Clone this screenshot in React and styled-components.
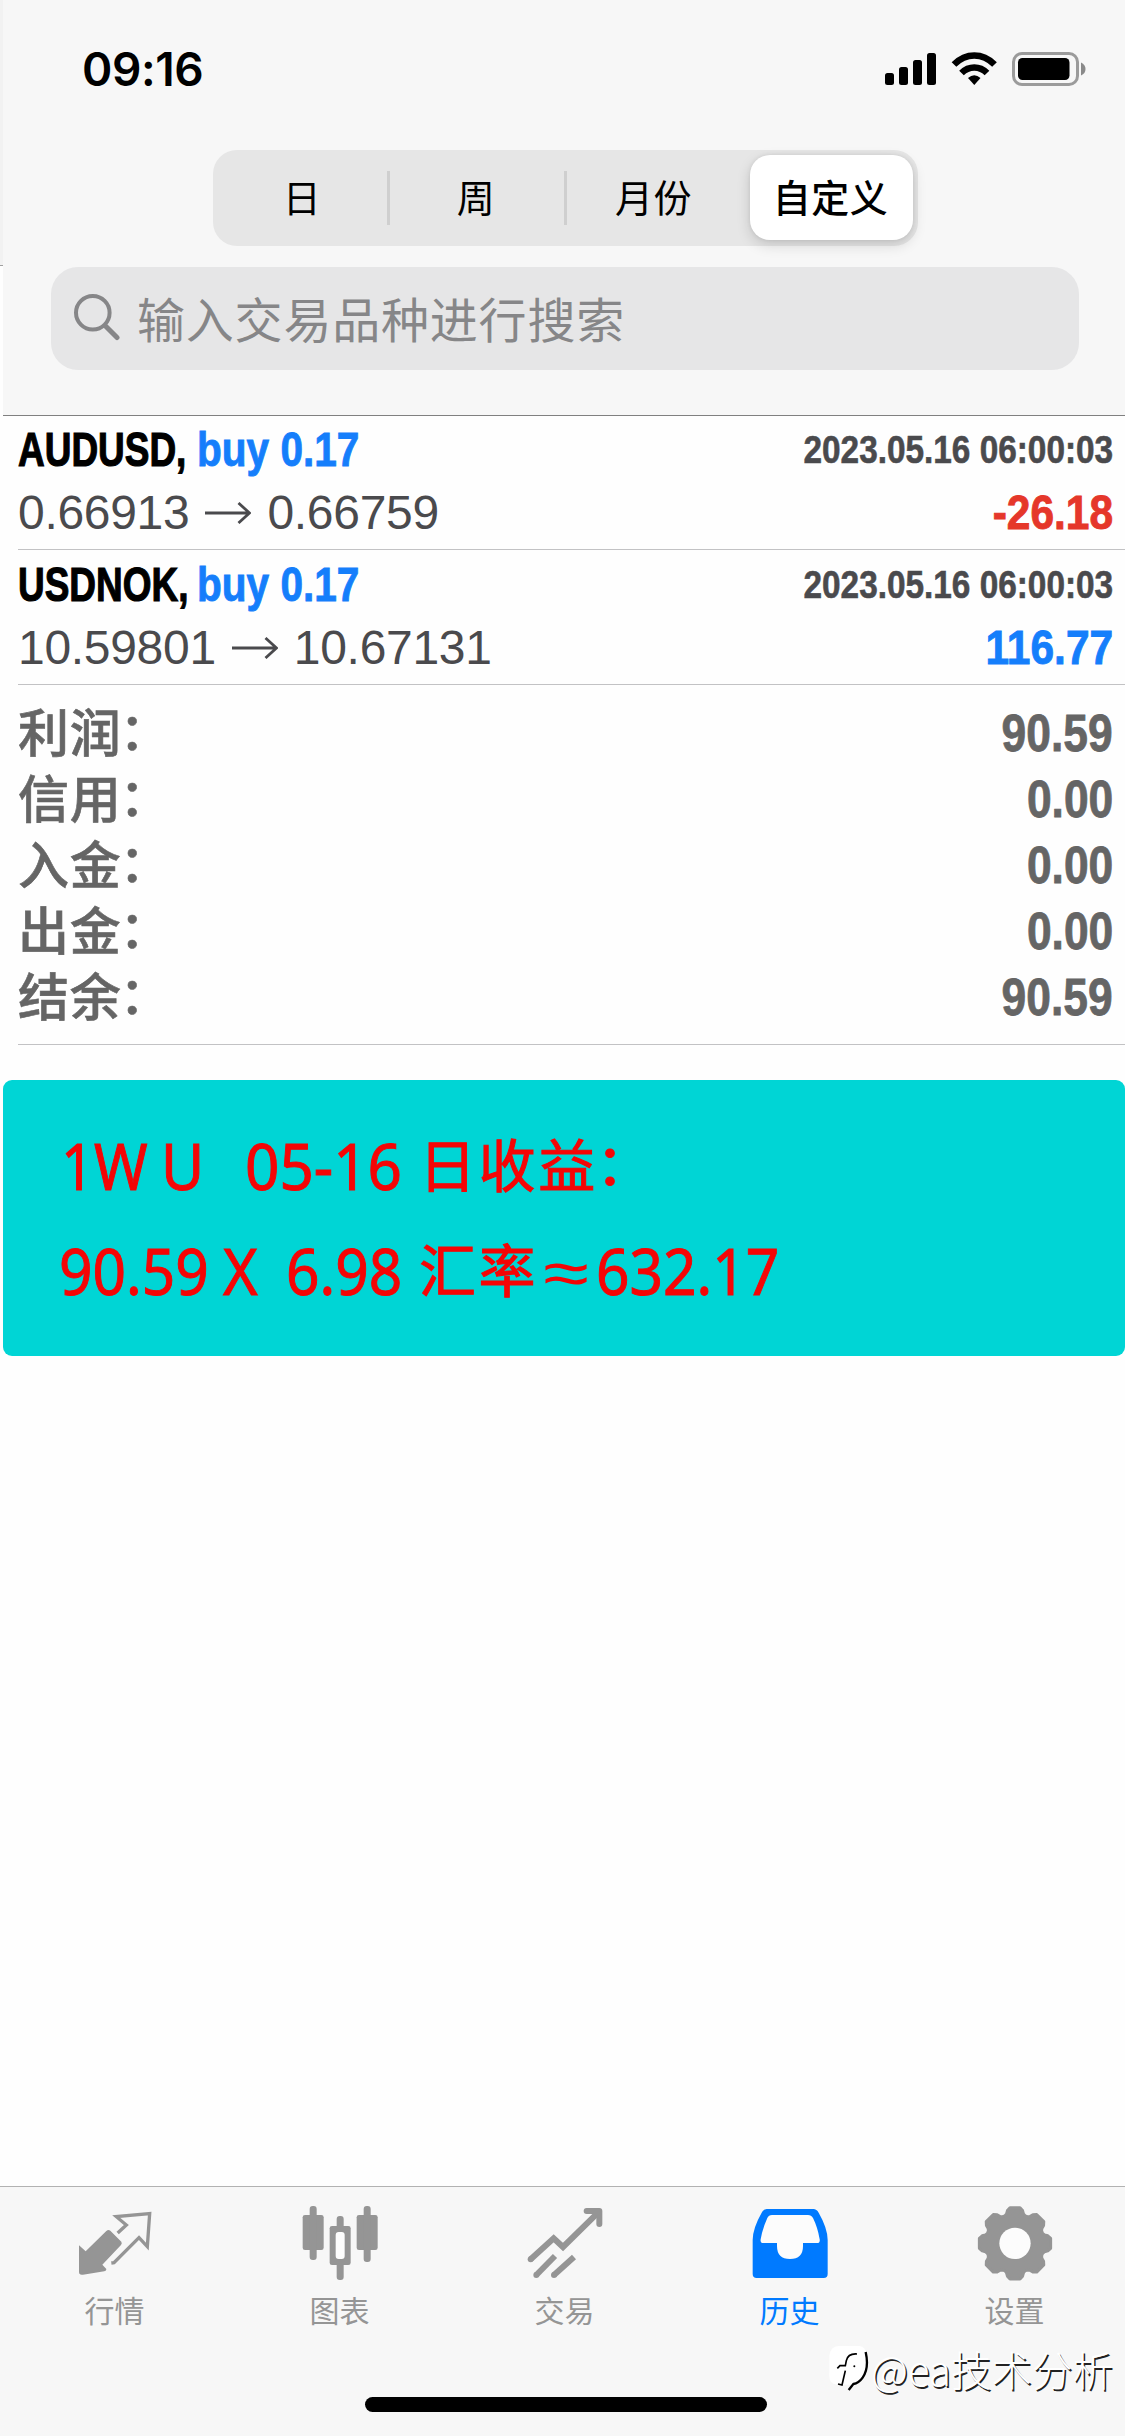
import React, { useState } from 'react';
import styled, { createGlobalStyle } from 'styled-components';

const ranges = [
  { id: 'day', label: '日' },
  { id: 'week', label: '周' },
  { id: 'month', label: '月份' },
  { id: 'custom', label: '自定义' },
];

const deals = [
  { symbol: 'AUDUSD', side: 'buy 0.17', open: '0.66913', close: '0.66759', time: '2023.05.16 06:00:03', profit: '-26.18' },
  { symbol: 'USDNOK', side: 'buy 0.17', open: '10.59801', close: '10.67131', time: '2023.05.16 06:00:03', profit: '116.77' },
];

const totals = [
  ['利润', '90.59'],
  ['信用', '0.00'],
  ['入金', '0.00'],
  ['出金', '0.00'],
  ['结余', '90.59'],
];

const gearPath = () => {
  const points = [];
  for (let k = 0; k < 8; k++) {
    [[-20, 88], [-16, 92], [-13, 101], [-8, 108], [8, 108], [13, 101], [16, 92], [20, 88]].forEach(([deg, r]) => {
      const a = ((k * 45 + deg) * Math.PI) / 180;
      points.push(`${(583 + r * Math.sin(a)).toFixed(1)} ${(160 - r * Math.cos(a)).toFixed(1)}`);
    });
  }
  return `M${points.join('L')}Z`;
};

const StatusIcons = () => (
  <svg width="202" height="36" viewBox="884 51 202 36">
    <rect x="885" y="73" width="9" height="12" rx="2.5" />
    <rect x="899" y="67" width="9" height="18" rx="2.5" />
    <rect x="913" y="60" width="9" height="25" rx="2.5" />
    <rect x="927" y="53" width="9" height="32" rx="2.5" />
    <g fill="none" stroke="#000" strokeWidth="6.6">
      <path d="M954 64.5Q963 55.5 974.3 55.5Q985.5 55.5 994.5 64.5" />
      <path d="M961.5 73Q967 67.5 974.3 67.5Q981.5 67.5 987 73" />
    </g>
    <path d="M968 78Q974.3 72.5 980.5 78L974.3 85Z" />
    <rect x="1013.5" y="53.5" width="64" height="31" rx="8.5" fill="none" stroke="#9b9b9b" strokeWidth="3" />
    <rect x="1018" y="58" width="51.5" height="22" rx="4.5" />
    <path d="M1081 62.5Q1085.5 64.5 1085.5 69Q1085.5 73.5 1081 75.5Z" fill="#8a8a8a" />
  </svg>
);

const SearchIcon = () => (
  <svg width="48" height="48" viewBox="73 292.5 48 48" fill="none" stroke="#868688" strokeLinecap="round">
    <circle cx="92.8" cy="312.3" r="16.8" strokeWidth="4" />
    <path d="M105.5 325.5L117 337" strokeWidth="5" />
  </svg>
);

const Arrow = () => (
  <svg width="46" height="22" viewBox="0 0 46 22" fill="none" stroke="#4a4a4d" strokeWidth="2.8">
    <path d="M0 11H44M33.5 1L44.5 11L33.5 21" />
  </svg>
);

const QuotesIcon = () => (
  <TabIcon viewBox="72 39 240 240">
    <path d="M84 166L104 184L166 123Q172 118 178 122L211 155Q214 160 210 165L154 224L166 237Q167 243 160 244L96 254Q84 256 84 246Z" />
    <path d="M200 129L226 105L196 80L296 71L289 170L264 143L189 218L181 219" fill="none" stroke="currentColor" strokeWidth="10" />
  </TabIcon>
);

const ChartsIcon = () => (
  <TabIcon viewBox="748 39 240 240">
    <rect x="756" y="75" width="63" height="105" rx="7" />
    <rect x="777" y="48" width="21" height="162" rx="9" />
    <rect x="918" y="75" width="63" height="105" rx="7" />
    <rect x="939" y="48" width="21" height="168" rx="9" />
    <rect x="858" y="78" width="21" height="60" rx="9" />
    <rect x="858" y="200" width="21" height="70" rx="9" />
    <rect x="837" y="108" width="63" height="117" rx="7" />
    <rect x="855" y="126" width="27" height="81" rx="9" fill="#fdfdfd" />
  </TabIcon>
);

const TradeIcon = () => (
  <TabIcon viewBox="73 39 240 240">
    <g fill="none" stroke="currentColor" strokeWidth="18">
      <path d="M90 208L159 145L187 171L292 68" />
      <path d="M107 255L163 198" />
      <path d="M160 255L220 201" />
      <path d="M258 63H296V102" strokeLinecap="round" strokeLinejoin="round" />
    </g>
    <circle cx="90" cy="208" r="9" />
    <circle cx="107" cy="255" r="9" />
    <circle cx="160" cy="255" r="9" />
  </TabIcon>
);

const HistoryIcon = () => (
  <TabIcon viewBox="748 39 240 240">
    <path d="M798 57H938Q948 57 954 68Q981 115 981 150V252Q981 264 969 264H768Q756 264 756 252V150Q756 115 783 68Q789 57 798 57Z" />
    <path
      d="M814 75H922Q932 75 937 84Q951 112 957 148Q959 159 949 159H907V168Q907 207 868 207Q829 207 829 168V159H788Q778 159 780 148Q786 114 800 84Q804 75 814 75Z"
      fill="#fcfcfc"
    />
  </TabIcon>
);

const SettingsIcon = () => (
  <TabIcon viewBox="463 39 240 240">
    <path d={gearPath()} stroke="currentColor" strokeWidth="9" strokeLinejoin="round" />
    <circle cx="583" cy="160" r="47" fill="#fcfcfc" />
  </TabIcon>
);

const WatermarkLogo = () => (
  <svg width="42" height="50" viewBox="18 484 126 150" fill="none" stroke="#000" strokeWidth="5">
    <path d="M50 490H112Q132 492 134 520V570Q126 604 90 606H44Q22 604 22 580V520Q24 492 50 490Z" fill="#fff" stroke="none" />
    <path d="M105 514Q78 512 73 534L70 549H54L46 557" />
    <path d="M70 564L60 607L48 604" />
    <path d="M131 508Q142 556 122 585Q110 602 94 604L80 622" strokeWidth="7" />
    <circle cx="97" cy="551" r="3" fill="#000" stroke="none" />
  </svg>
);

const tabs = [
  { id: 'quotes', label: '行情', Icon: QuotesIcon },
  { id: 'charts', label: '图表', Icon: ChartsIcon },
  { id: 'trade', label: '交易', Icon: TradeIcon },
  { id: 'history', label: '历史', Icon: HistoryIcon },
  { id: 'settings', label: '设置', Icon: SettingsIcon },
];

const App = () => {
  const [range, setRange] = useState('custom');
  const [tab, setTab] = useState('history');

  return (
    <Screen>
      <GlobalStyle />
      <Header>
        <Edge />
        <HeaderBody>
          <StatusBar>
            <Clock>09:16</Clock>
            <StatusIcons />
          </StatusBar>
          <Segmented>
            {ranges.map(({ id, label }) => (
              <Segment key={id} $active={id === range} onClick={() => setRange(id)}>
                <SegmentLabel>{label}</SegmentLabel>
              </Segment>
            ))}
          </Segmented>
          <SearchBox>
            <SearchIcon />
            <Placeholder>输入交易品种进行搜索</Placeholder>
          </SearchBox>
        </HeaderBody>
      </Header>

      <Content>
        {deals.map((deal) => (
          <Deal key={deal.symbol}>
            <Line>
              <Title>
                <Symbol>{deal.symbol},</Symbol>
                <Side>{deal.side}</Side>
              </Title>
              <Time>{deal.time}</Time>
            </Line>
            <Line>
              <Prices>
                {deal.open}
                <Arrow />
                {deal.close}
              </Prices>
              <Profit $loss={deal.profit.startsWith('-')}>{deal.profit}</Profit>
            </Line>
          </Deal>
        ))}
        <Totals>
          {totals.map(([label, value]) => (
            <TotalRow key={label}>
              <TotalLabel>
                {label}
                <Colon>：</Colon>
              </TotalLabel>
              <TotalValue>{value}</TotalValue>
            </TotalRow>
          ))}
        </Totals>
        <Banner>
          <BannerLine>
            <Latin $slot={100} $scale={0.9}>1W</Latin>
            <Latin $slot={84}>U</Latin>
            <Latin $slot={174} $scale={0.94}>05-16</Latin>
            <Hanzi $slot={240}>
              日收益<Colon>：</Colon>
            </Hanzi>
          </BannerLine>
          <BannerLine $outdent>
            <Latin $slot={164} $scale={0.915}>90.59</Latin>
            <Latin $slot={63}>X</Latin>
            <Latin $slot={133} $scale={0.915}>6.98</Latin>
            <Hanzi $slot={124}>汇率</Hanzi>
            <Latin $slot={53} $scale={1.3} $thin>≈</Latin>
            <Latin $slot={190} $scale={0.915}>632.17</Latin>
          </BannerLine>
        </Banner>
      </Content>

      <Footer>
        <TabBar>
          {tabs.map(({ id, label, Icon }) => (
            <Tab key={id} $active={id === tab} onClick={() => setTab(id)}>
              <Icon />
              <TabLabel>{label}</TabLabel>
            </Tab>
          ))}
        </TabBar>
        <HomeIndicator />
      </Footer>
      <Watermark>
        <WatermarkLogo />
        @ea技术分析
      </Watermark>
    </Screen>
  );
};

const GlobalStyle = createGlobalStyle`
  * {
    box-sizing: border-box;
  }

  body {
    margin: 0;
    background: #fff;
  }
`;

const Screen = styled.div`
  position: relative;
  display: flex;
  flex-direction: column;
  width: 1125px;
  height: 2436px;
  overflow: hidden;
  background: #fefefe;
  font-family: 'Liberation Sans', 'Noto Sans CJK SC', sans-serif;
`;

const Header = styled.header`
  display: flex;
  flex: none;
  height: 416px;
`;

const Edge = styled.div`
  width: 3px;
  height: 266px;
  background: #f2f2f2;
  border-bottom: 1px solid #a0a0a0;
`;

const HeaderBody = styled.div`
  flex: 1;
  display: flex;
  flex-direction: column;
  background: #f7f7f7;
  border-bottom: 1px solid #808080;
`;

const StatusBar = styled.div`
  display: flex;
  justify-content: space-between;
  align-items: center;
  height: 100px;
  margin-bottom: 50px;
  padding: 38px 39px 0 79px;
`;

const Clock = styled.span`
  font-family: Inter, sans-serif;
  font-size: 46px;
  font-weight: 600;
  line-height: 60px;
  letter-spacing: -0.4px;
`;

const Segmented = styled.div`
  display: grid;
  grid-template-columns: 171px 177px 183px 163px;
  width: 705px;
  height: 96px;
  margin-left: 210px;
  padding: 5px 5px 6px 6px;
  background: #e6e6e6;
  border-radius: 24px;
`;

const Segment = styled.button`
  display: flex;
  align-items: center;
  justify-content: center;
  padding: 0;
  border: none;
  border-radius: 20px;
  background: ${({ $active }) => ($active ? '#fff' : 'none')};
  box-shadow: ${({ $active }) => ($active ? '0 5px 14px rgba(0, 0, 0, 0.15), 0 0 4px rgba(0, 0, 0, 0.08)' : 'none')};
  font-family: 'Noto Sans CJK SC', sans-serif;
  font-size: 38px;
  font-weight: ${({ $active }) => ($active ? 500 : 400)};
  letter-spacing: 0.5px;
  color: #000;

  &:nth-child(-n + 2)::after {
    content: '';
    width: 3px;
    height: 54px;
    margin-left: auto;
    background: #cfcfcf;
  }

  &:nth-child(-n + 2)::before {
    content: '';
    margin-right: auto;
  }

  &:nth-child(3) {
    padding-right: 8px;
  }
`;

const SegmentLabel = styled.span`
  line-height: 60px;
  padding: 0 2px 4px 0;
`;

const SearchBox = styled.div`
  display: flex;
  align-items: center;
  width: 1028px;
  height: 103px;
  margin: 21px 0 0 48px;
  padding: 0 0 4px 22px;
  gap: 16px;
  background: #e6e6e7;
  border-radius: 27px;
`;

const Placeholder = styled.span`
  font-family: 'Noto Sans CJK SC', sans-serif;
  font-size: 48px;
  font-weight: 400;
  line-height: 60px;
  letter-spacing: 0.8px;
  color: #868688;
`;

const Content = styled.main`
  flex: 1;
`;

const Deal = styled.section`
  display: flex;
  flex-direction: column;
  justify-content: flex-end;
  gap: 3px;
  height: 135px;
  margin-left: 18px;
  padding: 0 12px 6px 0;
  border-bottom: 1px solid #c2c2c4;

  &:first-child {
    height: 134px;
  }
`;

const Line = styled.div`
  display: flex;
  justify-content: space-between;
  height: 60px;
  line-height: 60px;
  font-size: 48px;
  white-space: nowrap;
`;

const Title = styled.div`
  display: flex;
  font-weight: bold;
`;

const Symbol = styled.span`
  width: 179px;
  color: #000;
  transform: scaleX(0.77);
  transform-origin: left;
  -webkit-text-stroke: 1.2px;
`;

const Side = styled.span`
  color: #157efb;
  transform: scaleX(0.845);
  transform-origin: left;
  -webkit-text-stroke: 0.9px;
`;

const Time = styled.span`
  font-size: 39px;
  font-weight: bold;
  color: #4a4a4d;
  transform: scaleX(0.855);
  transform-origin: right;
  -webkit-text-stroke: 0.6px;
`;

const Prices = styled.div`
  display: flex;
  align-items: center;
  gap: 16px;
  letter-spacing: -0.3px;
  color: #4a4a4d;
`;

const Profit = styled.span`
  font-weight: bold;
  color: ${({ $loss }) => ($loss ? '#e5372a' : '#157efb')};
  transform: scaleX(0.885);
  transform-origin: right;
  -webkit-text-stroke: 0.9px;
`;

const Totals = styled.section`
  height: 360px;
  margin-left: 18px;
  padding: 16px 12px 0 0;
  border-bottom: 1px solid #c2c2c4;
`;

const TotalRow = styled.div`
  display: flex;
  justify-content: space-between;
  height: 66px;
  line-height: 66px;
  font-size: 51px;
  color: #656565;
`;

const TotalLabel = styled.span`
  height: 66px;
  margin-top: -4px;
  font-family: 'Noto Sans CJK SC', sans-serif;
  font-weight: 500;
  letter-spacing: 0.7px;
  -webkit-text-stroke: 0.6px;
`;

const Colon = styled.span`
  display: inline-block;
  transform: translate(-2px, -2px);
`;

const TotalValue = styled.span`
  font-weight: bold;
  transform: scaleX(0.87);
  transform-origin: right;
  -webkit-text-stroke: 0.8px;
`;

const Banner = styled.section`
  display: flex;
  flex-direction: column;
  gap: 5px;
  height: 276px;
  margin: 35px 0 0 3px;
  padding: 36px 0 0 58px;
  background: #00d5d5;
  border-radius: 9px;
`;

const BannerLine = styled.div`
  display: flex;
  height: 100px;
  margin-left: ${({ $outdent }) => ($outdent ? '-2px' : 0)};
  line-height: 100px;
  color: #f50505;
  white-space: nowrap;
`;

const Latin = styled.span`
  width: ${({ $slot }) => $slot}px;
  font-family: 'Noto Sans', sans-serif;
  font-size: 64px;
  font-weight: 400;
  transform: scaleX(${({ $scale }) => $scale || 0.925});
  transform-origin: left;
  -webkit-text-stroke: ${({ $thin }) => ($thin ? 0 : '1px')};
`;

const Hanzi = styled.span`
  width: ${({ $slot }) => $slot}px;
  height: 100px;
  margin-top: -4px;
  font-family: 'Noto Sans CJK SC', sans-serif;
  font-size: 57px;
  font-weight: 400;
  letter-spacing: 2.6px;
  -webkit-text-stroke: 1px;
`;

const Footer = styled.footer`
  height: 250px;
  border-top: 1px solid #b2b2b2;
  background: #f7f7f7;
`;

const TabBar = styled.nav`
  display: flex;
  height: 210px;
  padding: 16px 0 0 2px;
`;

const Tab = styled.button`
  display: flex;
  flex: 0 0 225px;
  flex-direction: column;
  align-items: center;
  gap: 6px;
  padding: 0;
  border: none;
  background: none;
  color: ${({ $active }) => ($active ? '#007aff' : '#959595')};
`;

const TabIcon = styled.svg`
  width: 80px;
  height: 80px;
  fill: currentColor;
`;

const TabLabel = styled.span`
  font-family: 'Noto Sans CJK SC', sans-serif;
  font-size: 30px;
  font-weight: 400;
  line-height: 40px;
`;

const HomeIndicator = styled.div`
  width: 402px;
  height: 15px;
  margin-left: 365px;
  border-radius: 8px;
  background: #000;
`;

const Watermark = styled.div`
  position: absolute;
  right: 12px;
  bottom: 37px;
  display: flex;
  align-items: center;
  gap: 1px;
  height: 60px;
  font-family: 'Noto Sans CJK SC', sans-serif;
  font-size: 40.5px;
  font-weight: 300;
  line-height: 60px;
  color: #fff;
  text-shadow: 1.5px 1.5px 0 #222;
`;

export default App;
